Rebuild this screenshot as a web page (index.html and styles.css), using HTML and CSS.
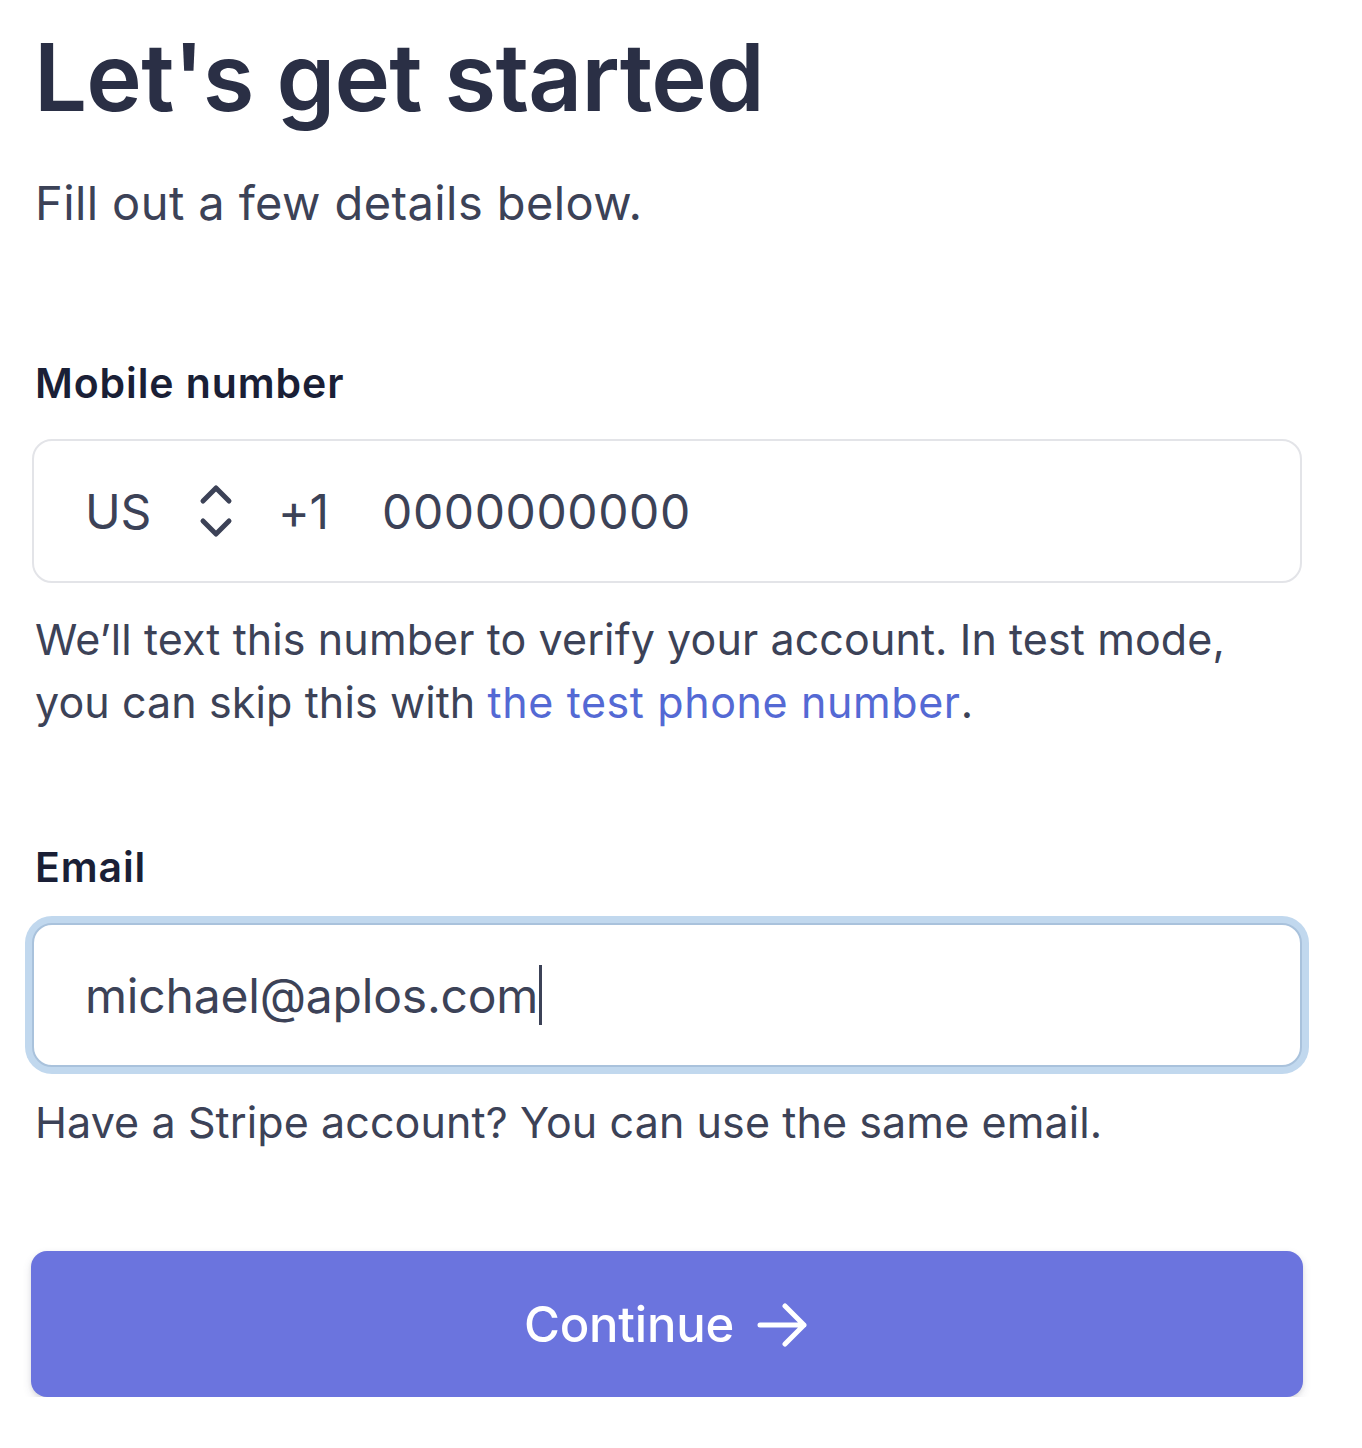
FILE: index.html
```html
<!DOCTYPE html>
<html lang="en">
<head>
<meta charset="utf-8">
<title>Let's get started</title>
<link rel="stylesheet" href="styles.css">
</head>
<body>
<main class="page">
  <h1 class="title">Let's get started</h1>
  <p class="subtitle">Fill out a few details below.</p>

  <section class="field field-phone">
    <label class="label">Mobile number</label>
    <div class="input phone">
      <span class="country">US</span>
      <svg class="chev" width="40" height="56" viewBox="0 0 40 56" aria-hidden="true">
        <path d="M7 18 L20 5 L33 18" fill="none" stroke="#3c4257" stroke-width="5" stroke-linecap="round" stroke-linejoin="round"/>
        <path d="M7 38 L20 51 L33 38" fill="none" stroke="#3c4257" stroke-width="5" stroke-linecap="round" stroke-linejoin="round"/>
      </svg>
      <span class="code">+1</span>
      <span class="number">0000000000</span>
    </div>
    <p class="help">We’ll text this number to verify your account. In test mode, you can skip this with <a class="link" href="#">the test phone number</a>.</p>
  </section>

  <section class="field field-email">
    <label class="label">Email</label>
    <div class="input email focused">
      <span class="value">michael@aplos.com</span><span class="caret"></span>
    </div>
    <p class="help">Have a Stripe account? You can use the same email.</p>
  </section>

  <button class="btn" type="button">
    <span>Continue</span>
    <svg class="arrow" width="54" height="50" viewBox="0 0 54 50" aria-hidden="true">
      <path d="M4 25 H48 M29 6 L48 25 L29 44" fill="none" stroke="#ffffff" stroke-width="5" stroke-linecap="round" stroke-linejoin="round"/>
    </svg>
  </button>
</main>
</body>
</html>
```

FILE: styles.css
```css
* { box-sizing: border-box; }
html, body { margin: 0; padding: 0; background: #ffffff; }
body {
  font-family: "Inter", "Noto Sans", "Liberation Sans", sans-serif;
  color: #3c4257;
}
.page {
  width: 1362px;
  padding: 20px 60px 0 32px;
  display: flex;
  flex-direction: column;
}
.title {
  margin: 0 0 0 2px;
  font-size: 94px;
  line-height: 114px;
  font-weight: 600;
  letter-spacing: -0.8px;
  color: #2a2f45;
}
.subtitle {
  margin: 42px 0 0 3px;
  font-size: 47px;
  line-height: 54px;
  font-weight: 400;
  letter-spacing: 0.4px;
  color: #3c4257;
}
.field { display: flex; flex-direction: column; }
.field-phone { margin-top: 128px; }
.field-email { margin-top: 108px; }
.label {
  margin-left: 3px;
  font-size: 41px;
  line-height: 50px;
  font-weight: 600;
  color: #1a1f36;
  letter-spacing: 0.9px;
}
.input {
  margin-top: 31px;
  width: 1270px;
  height: 144px;
  border: 2px solid #e3e4e8;
  border-radius: 20px;
  background: #fff;
  display: flex;
  align-items: center;
  padding-left: 51px;
  font-size: 48px;
  color: #3c4257;
  letter-spacing: -0.2px;
}
.phone .country { width: 111px; }
.phone .chev { margin-right: 42px; }
.phone .code { width: 104px; }
.phone .number { letter-spacing: 0.6px; }
.email.focused {
  border: 2px solid #a9c2dc;
  box-shadow: 0 0 0 7px #c1d8ee;
}
.caret {
  display: inline-block;
  width: 3px;
  height: 60px;
  background: #3c4257;
  margin-left: 1px;
}
.help {
  margin: 25px 0 0 3px;
  font-size: 43px;
  line-height: 63px;
  color: #3c4257;
  letter-spacing: 0.1px;
}
.field-email .help { margin-top: 24px; }
.link { color: #5469d4; text-decoration: none; letter-spacing: 0.6px; }
.btn {
  margin-top: 97px;
  width: 1272px;
  height: 146px;
  margin-left: -1px;
  border: none;
  border-radius: 16px;
  background: #6b74de;
  box-shadow: 0 4px 10px rgba(50, 50, 93, 0.12), 0 2px 4px rgba(0, 0, 0, 0.08);
  color: #ffffff;
  font-family: inherit;
  font-size: 49px;
  font-weight: 500;
  letter-spacing: -0.2px;
  display: flex;
  align-items: center;
  justify-content: center;
  gap: 22px;
}
.btn .arrow { margin-top: 2px; }
```
